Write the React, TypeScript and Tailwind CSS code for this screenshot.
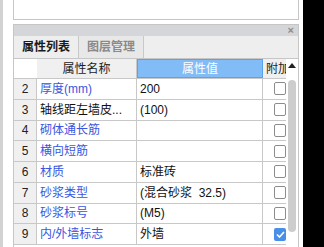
import React from 'react';

const rows = [
  { n: 2, name: '厚度(mm)', value: '200', blue: true, checked: false },
  { n: 3, name: '轴线距左墙皮...', value: '(100)', blue: false, checked: false },
  { n: 4, name: '砌体通长筋', value: '', blue: true, checked: false },
  { n: 5, name: '横向短筋', value: '', blue: true, checked: false },
  { n: 6, name: '材质', value: '标准砖', blue: true, checked: false },
  { n: 7, name: '砂浆类型', value: '(混合砂浆  32.5)', blue: true, checked: false },
  { n: 8, name: '砂浆标号', value: '(M5)', blue: true, checked: false },
  { n: 9, name: '内/外墙标志', value: '外墙', blue: true, checked: true },
];

const Checkbox = ({ checked }: { checked: boolean }) =>
  checked ? (
    <div className="w-[13px] h-[13px] rounded-[2px] bg-[#4a8fe7] flex items-center justify-center">
      <svg width="9" height="7" viewBox="0 0 9 7">
        <path d="M1 3.5 L3.5 6 L8 1" stroke="white" strokeWidth="1.6" fill="none" />
      </svg>
    </div>
  ) : (
    <div className="w-[13px] h-[13px] rounded-[2px] border border-[#8c8c8c] bg-white" />
  );

export default function App() {
  return (
    <div
      className="w-[324px] h-[247px] flex overflow-hidden bg-white text-[12px] leading-none"
      style={{ fontFamily: '"Liberation Sans", "Noto Sans CJK SC", sans-serif' }}
    >
      <div className="w-[3px] bg-[#d2d2d2]" />
      <div className="w-[300px] pl-[10px] pr-[4px] flex flex-col">
        <div className="h-[20px] border-x border-b border-[#c6c6c6] bg-white" />
        <div className="h-[4px]" />
        <div className="flex-1 flex flex-col border-x border-t border-[#c6c6c6] min-h-0">
          {/* title bar */}
          <div className="h-[11px] bg-[#d5d6d9] flex justify-end items-center pr-[4px] shrink-0">
            <span className="text-[#8c8c8c] text-[11px] font-bold">×</span>
          </div>
          {/* tabs */}
          <div className="h-[23px] bg-[#eeeeee] border-b border-[#c6c6c6] flex shrink-0">
            <div className="w-[65px] flex items-center justify-center text-[#1a1a1a] font-semibold border-r border-[#c8c8c8] text-[12px]">
              属性列表
            </div>
            <div className="w-[65px] flex items-center justify-center text-[#8a8a8a] font-semibold border-r border-[#c8c8c8] bg-[#e8e8e8] text-[12px]">
              图层管理
            </div>
          </div>
          {/* table */}
          <div className="flex-1 flex min-h-0">
            <div className="flex-1 flex flex-col min-w-0">
              <div className="h-[20px] flex shrink-0 border-b border-[#c8c8c8]">
                <div className="w-[23px] bg-white" />
                <div className="w-[100px] bg-[#f0f0f0] flex items-center justify-center text-[#222] border-r border-[#c8c8c8]">
                  属性名称
                </div>
                <div className="w-[126px] bg-[#82bcf6] border border-[#5aa2ec] flex items-center justify-center text-white">
                  属性值
                </div>
                <div className="flex-1 bg-[#f0f0f0] flex items-center pl-[3px] text-[#222] overflow-hidden whitespace-nowrap">
                  附加
                </div>
              </div>
              {rows.map((r) => (
                <div key={r.n} className="h-[20.75px] flex shrink-0 border-b border-[#c8c8c8]">
                  <div className="w-[23px] bg-[#f0f0f0] flex items-center justify-center text-[#222] border-r border-[#c8c8c8]">
                    {r.n}
                  </div>
                  <div
                    className={`w-[100px] flex items-center pl-[3px] border-r border-[#c8c8c8] whitespace-nowrap overflow-hidden ${
                      r.blue ? 'text-[#3a55e0]' : 'text-[#111]'
                    }`}
                  >
                    {r.name}
                  </div>
                  <div className="w-[126px] flex items-center pl-[3px] border-r border-[#c8c8c8] text-[#111] whitespace-pre overflow-hidden">
                    {r.value}
                  </div>
                  <div className="flex-1 flex items-center pl-[11px] overflow-hidden">
                    <Checkbox checked={r.checked} />
                  </div>
                </div>
              ))}
            </div>
            {/* scrollbar */}
            <div className="w-[12px] bg-white flex flex-col items-center shrink-0">
              <div className="h-[10px] flex items-center justify-center mt-[1px]">
                <svg width="8" height="5" viewBox="0 0 8 5">
                  <path d="M0 5 L4 0 L8 5 Z" fill="#222" />
                </svg>
              </div>
              <div className="w-[8px] h-[152px] mt-[10px] rounded-[4px] bg-[#cdcdcd]" />
            </div>
          </div>
        </div>
      </div>
      <div className="flex-1 bg-black" />
    </div>
  );
}
